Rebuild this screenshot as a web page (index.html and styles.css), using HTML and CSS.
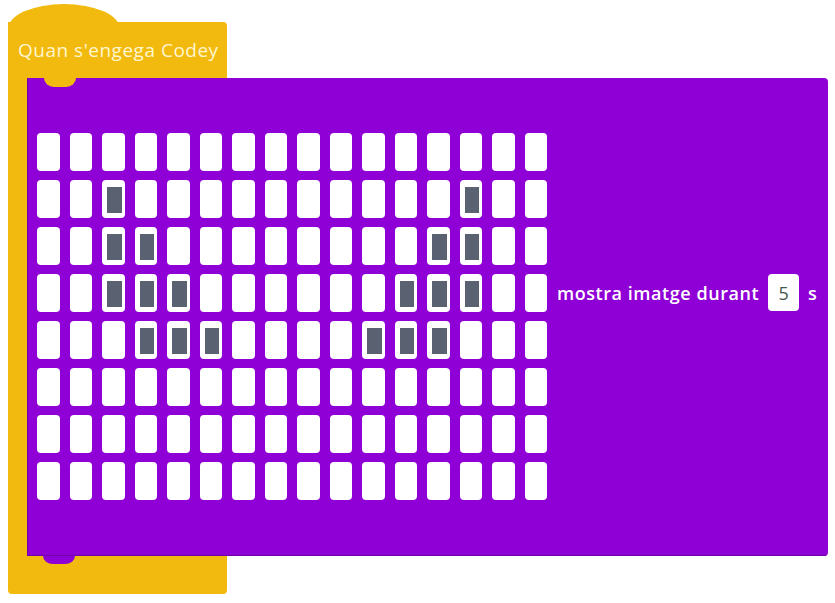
FILE: index.html
```html
<!DOCTYPE html>
<html lang="ca">
<head>
<meta charset="utf-8">
<title>Codey</title>
<link rel="stylesheet" href="styles.css">
</head>
<body>
<div class="script">
  <div class="hat"><span class="hat-label">Quan s'engega Codey</span></div>
  <div class="mouth">
    <div class="arm"></div>
    <div class="display-block">
      <div class="matrix">
        <i class="c"></i><i class="c"></i><i class="c"></i><i class="c"></i><i class="c"></i><i class="c"></i><i class="c"></i><i class="c"></i><i class="c"></i><i class="c"></i><i class="c"></i><i class="c"></i><i class="c"></i><i class="c"></i><i class="c"></i><i class="c"></i>
        <i class="c"></i><i class="c"></i><i class="c on"></i><i class="c"></i><i class="c"></i><i class="c"></i><i class="c"></i><i class="c"></i><i class="c"></i><i class="c"></i><i class="c"></i><i class="c"></i><i class="c"></i><i class="c on"></i><i class="c"></i><i class="c"></i>
        <i class="c"></i><i class="c"></i><i class="c on"></i><i class="c on"></i><i class="c"></i><i class="c"></i><i class="c"></i><i class="c"></i><i class="c"></i><i class="c"></i><i class="c"></i><i class="c"></i><i class="c on"></i><i class="c on"></i><i class="c"></i><i class="c"></i>
        <i class="c"></i><i class="c"></i><i class="c on"></i><i class="c on"></i><i class="c on"></i><i class="c"></i><i class="c"></i><i class="c"></i><i class="c"></i><i class="c"></i><i class="c"></i><i class="c on"></i><i class="c on"></i><i class="c on"></i><i class="c"></i><i class="c"></i>
        <i class="c"></i><i class="c"></i><i class="c"></i><i class="c on"></i><i class="c on"></i><i class="c on"></i><i class="c"></i><i class="c"></i><i class="c"></i><i class="c"></i><i class="c on"></i><i class="c on"></i><i class="c on"></i><i class="c"></i><i class="c"></i><i class="c"></i>
        <i class="c"></i><i class="c"></i><i class="c"></i><i class="c"></i><i class="c"></i><i class="c"></i><i class="c"></i><i class="c"></i><i class="c"></i><i class="c"></i><i class="c"></i><i class="c"></i><i class="c"></i><i class="c"></i><i class="c"></i><i class="c"></i>
        <i class="c"></i><i class="c"></i><i class="c"></i><i class="c"></i><i class="c"></i><i class="c"></i><i class="c"></i><i class="c"></i><i class="c"></i><i class="c"></i><i class="c"></i><i class="c"></i><i class="c"></i><i class="c"></i><i class="c"></i><i class="c"></i>
        <i class="c"></i><i class="c"></i><i class="c"></i><i class="c"></i><i class="c"></i><i class="c"></i><i class="c"></i><i class="c"></i><i class="c"></i><i class="c"></i><i class="c"></i><i class="c"></i><i class="c"></i><i class="c"></i><i class="c"></i><i class="c"></i>
      </div>
      <div class="label-row">
        <span class="label-text">mostra imatge durant</span>
        <span class="num">5</span>
        <span class="label-text">s</span>
      </div>
    </div>
  </div>
  <div class="foot"></div>
</div>
</body>
</html>
```

FILE: styles.css
```css
html, body {
  margin: 0;
  padding: 0;
  background: #ffffff;
}

.script {
  margin: 22px 0 0 8px;
  display: flex;
  flex-direction: column;
  align-items: flex-start;
  font-family: "Open Sans", "Liberation Sans", sans-serif;
}

.hat {
  position: relative;
  width: 219px;
  height: 56px;
  box-sizing: border-box;
  background: #f2ba0e;
  border-radius: 0 4px 0 0;
  display: flex;
  align-items: center;
  padding-left: 10px;
}

.hat::before {
  content: "";
  position: absolute;
  left: 0;
  top: -18px;
  width: 112px;
  height: 50px;
  border-radius: 50%;
  background: #f2ba0e;
}

.hat-label {
  position: relative;
  color: #fff6cf;
  font-size: 19px;
  letter-spacing: 0.5px;
  line-height: 1;
  white-space: nowrap;
}

.mouth {
  display: flex;
}

.arm {
  width: 19px;
  background: #f2ba0e;
}

.display-block {
  position: relative;
  z-index: 1;
  width: 801px;
  height: 478px;
  box-sizing: border-box;
  background: #8f00d7;
  border-radius: 0 4px 4px 0;
  box-shadow: inset 1px -1px 0 #6e00a8;
  display: flex;
  align-items: flex-start;
  gap: 10px;
  padding: 55px 10px 0 10px;
}

.display-block::before {
  content: "";
  position: absolute;
  left: 17px;
  top: 0;
  width: 32px;
  height: 9px;
  background: #f2ba0e;
  border-radius: 0 0 10px 10px / 0 0 9px 9px;
}

.display-block::after {
  content: "";
  position: absolute;
  left: 16px;
  top: 100%;
  width: 32px;
  height: 8px;
  background: #8f00d7;
  border-radius: 0 0 10px 10px / 0 0 8px 8px;
}

.matrix {
  display: grid;
  flex-shrink: 0;
  grid-template-columns: repeat(16, 22.5px);
  grid-auto-rows: 38px;
  column-gap: 10px;
  row-gap: 9px;
}

.c {
  display: block;
  background: #ffffff;
  border-radius: 4px;
}

.c.on {
  box-sizing: border-box;
  background: #5a6170;
  border-style: solid;
  border-color: #ffffff;
  border-width: 7px 3.5px 5px 5px;
}

.label-row {
  flex-shrink: 0;
  white-space: nowrap;
  margin-top: 141px;
  height: 37px;
  display: flex;
  align-items: center;
  gap: 9px;
  color: #ffffff;
  font-size: 18px;
  font-weight: 600;
  letter-spacing: 0.55px;
}

.num {
  width: 31px;
  height: 37px;
  box-sizing: border-box;
  background: #ffffff;
  border-radius: 4px;
  color: #45574c;
  font-weight: 400;
  font-size: 18px;
  letter-spacing: 0;
  display: flex;
  align-items: center;
  justify-content: center;
}

.foot {
  width: 219px;
  height: 38px;
  background: #f2ba0e;
  border-radius: 0 0 4px 4px;
}
```
